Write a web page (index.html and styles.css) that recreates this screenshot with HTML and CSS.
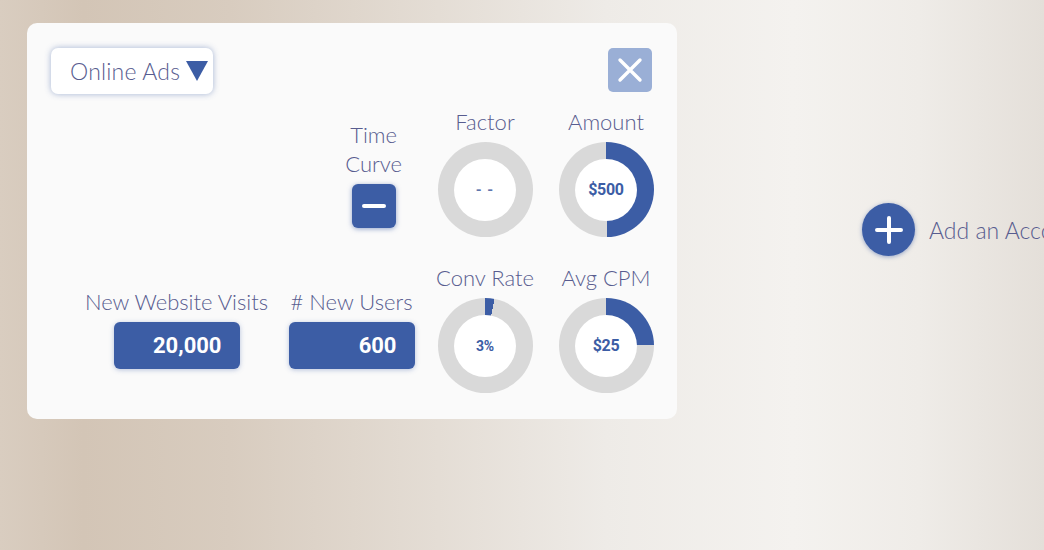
FILE: index.html
```html
<!DOCTYPE html>
<html lang="en">
<head>
    <meta charset="UTF-8">
    <meta name="viewport" content="width=device-width, initial-scale=1.0">
    <title>Online Ads Calculator</title>
    <link rel="stylesheet" href="styles.css">
</head>
<body>
    <div class="ad-card">
        <div class="ad-card-header">
            <div class="channel-select" tabindex="0">
                <span class="channel-select-text">Online Ads</span>
                <span class="channel-select-arrow"></span>
            </div>
            <button class="close-btn" aria-label="Close">
                <svg width="26" height="26" viewBox="0 0 26 26">
                    <path d="M3 3 L23 23 M23 3 L3 23" stroke="#fff" stroke-width="3.4" stroke-linecap="round"/>
                </svg>
            </button>
        </div>

        <div class="ad-card-grid">
            <div class="metric metric-curve">
                <span class="metric-label curve-label">Time<br>Curve</span>
                <button class="curve-btn" aria-label="Toggle time curve"><span class="curve-btn-bar"></span></button>
            </div>
            <div class="metric metric-col3">
                <span class="metric-label">Factor</span>
                <div class="ring" style="--p: 0%">
                    <div class="ring-inner ring-empty">- -</div>
                </div>
            </div>
            <div class="metric metric-col4">
                <span class="metric-label">Amount</span>
                <div class="ring" style="--p: 50%">
                    <div class="ring-inner">$500</div>
                </div>
            </div>

            <div class="metric metric-col1">
                <span class="metric-label">New Website Visits</span>
                <div class="value-box">20,000</div>
            </div>
            <div class="metric metric-col2">
                <span class="metric-label"># New Users</span>
                <div class="value-box">600</div>
            </div>
            <div class="metric metric-col3">
                <span class="metric-label">Conv Rate</span>
                <div class="ring" style="--p: 3%">
                    <div class="ring-inner ring-small">3%</div>
                </div>
            </div>
            <div class="metric metric-col4">
                <span class="metric-label">Avg CPM</span>
                <div class="ring" style="--p: 25%">
                    <div class="ring-inner">$25</div>
                </div>
            </div>
        </div>
    </div>

    <div class="add-account">
        <span class="add-account-btn">
            <svg width="30" height="30" viewBox="0 0 30 30">
                <path d="M15 3 V27 M3 15 H27" stroke="#fff" stroke-width="4" stroke-linecap="round"/>
            </svg>
        </span>
        <span class="add-account-text">Add an Account</span>
    </div>
</body>
</html>
```

FILE: styles.css
```css
html, body {
    margin: 0;
    padding: 0;
}
body {
    width: 1044px;
    height: 550px;
    overflow: hidden;
    box-sizing: border-box;
    padding: 23px 0 0 27px;
    display: flex;
    align-items: flex-start;
    gap: 185px;
    font-family: 'Lato', 'Open Sans', sans-serif;
    font-weight: 300;
    color: #585c8f;
    background: linear-gradient(to right, #d9cdc0 0%, #d3c5b6 8%, #d8ccbf 22%, #e4ddd5 42%, #eeebe7 58%, #f4f2ef 76%, #efece8 88%, #e4dfd9 100%);
}

/* Card */
.ad-card {
    width: 650px;
    box-sizing: border-box;
    background-color: #fafafa;
    border-radius: 10px;
    padding: 25px 25px 26px 24px;
    flex-shrink: 0;
}
.ad-card-header {
    display: flex;
    justify-content: space-between;
    align-items: flex-start;
}
.channel-select {
    width: 162px;
    height: 46px;
    box-sizing: border-box;
    background-color: #ffffff;
    border-radius: 7px;
    box-shadow: 0 0 6px rgba(60, 93, 165, 0.45);
    display: flex;
    align-items: center;
    padding-left: 19px;
    gap: 6px;
    cursor: pointer;
}
.channel-select-text {
    font-size: 23px;
    letter-spacing: 0.2px;
}
.channel-select-arrow {
    width: 0;
    height: 0;
    border-left: 11px solid transparent;
    border-right: 11px solid transparent;
    border-top: 20px solid #3c5da5;
}
.close-btn {
    width: 44px;
    height: 44px;
    border: none;
    border-radius: 5px;
    background-color: #9aafd6;
    display: flex;
    align-items: center;
    justify-content: center;
    padding: 0;
    cursor: pointer;
}

/* Metrics grid */
.ad-card-grid {
    display: grid;
    grid-template-columns: 183px 125px 100px 100px;
    column-gap: 21px;
    row-gap: 29px;
    align-items: center;
    margin-top: 16px;
    padding-left: 34px;
}
.metric {
    display: flex;
    flex-direction: column;
    align-items: center;
    gap: 8px;
}
.metric-col1 { grid-column: 1; }
.metric-col2 { grid-column: 2; }
.metric-col3 { grid-column: 3; }
.metric-col4 { grid-column: 4; }
.metric-curve {
    grid-column: 2;
    justify-self: end;
    margin-right: 12px;
    gap: 6px;
}
.metric-label {
    font-size: 22px;
    line-height: 24px;
    white-space: nowrap;
    text-align: center;
}
.curve-label {
    line-height: 29px;
}
.curve-btn {
    width: 44px;
    height: 44px;
    border: none;
    border-radius: 6px;
    background-color: #3c5da5;
    box-shadow: 0 1px 5px rgba(60, 93, 165, 0.55);
    display: flex;
    align-items: center;
    justify-content: center;
    padding: 0;
    cursor: pointer;
}
.curve-btn-bar {
    width: 24px;
    height: 4px;
    border-radius: 2px;
    background-color: #ffffff;
}

/* Value boxes */
.value-box {
    width: 126px;
    height: 47px;
    box-sizing: border-box;
    background-color: #3c5da5;
    border-radius: 6px;
    box-shadow: 0 1px 5px rgba(60, 93, 165, 0.35);
    color: #ffffff;
    font-family: 'Roboto', sans-serif;
    font-weight: 700;
    font-size: 22px;
    display: flex;
    align-items: center;
    justify-content: flex-end;
    padding-right: 18px;
}

/* Rings */
.ring {
    width: 95px;
    height: 95px;
    border-radius: 50%;
    background: conic-gradient(#3c5da5 0 var(--p), #d9d9d9 var(--p) 100%);
    display: flex;
    align-items: center;
    justify-content: center;
}
.ring-inner {
    width: 62px;
    height: 62px;
    border-radius: 50%;
    background-color: #ffffff;
    display: flex;
    align-items: center;
    justify-content: center;
    font-family: 'Roboto', sans-serif;
    font-weight: 700;
    font-size: 16px;
    letter-spacing: -0.3px;
    color: #3c5da5;
}
.ring-small {
    font-size: 14px;
}
.ring-empty {
    font-size: 15px;
    font-weight: 700;
    letter-spacing: 1px;
    color: #5f76ad;
}

/* Add account */
.add-account {
    display: flex;
    align-items: center;
    gap: 14px;
    margin-top: 180px;
    white-space: nowrap;
    flex-shrink: 0;
}
.add-account-btn {
    width: 53px;
    height: 53px;
    border-radius: 50%;
    background-color: #3c5da5;
    box-shadow: 0 1px 4px rgba(60, 93, 165, 0.5);
    display: flex;
    align-items: center;
    justify-content: center;
}
.add-account-text {
    font-size: 23px;
}
```
